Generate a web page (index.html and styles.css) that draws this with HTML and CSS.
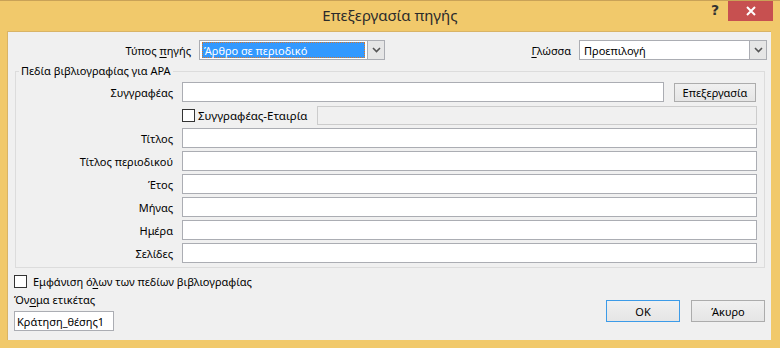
FILE: index.html
```html
<!DOCTYPE html>
<html lang="el">
<head>
<meta charset="utf-8">
<link rel="stylesheet" href="styles.css">
</head>
<body>
<div class="window">
  <div class="titlebar">
    <div class="title">Επεξεργασία πηγής</div>
    <div class="help">?</div>
    <div class="close">
      <svg width="12" height="10" viewBox="0 0 12 10"><path d="M2 1 L10 9 M10 1 L2 9" stroke="#fff" stroke-width="2"/></svg>
    </div>
  </div>
  <div class="client">
    <div class="toprow">
      <label class="toplabel type-label">Τύπος <u>π</u>ηγής</label>
      <div class="select type-select">
        <span class="selval"><span class="hl">Άρθρο σε περιοδικό</span></span>
        <span class="arrow"><svg width="9" height="6" viewBox="0 0 9 6"><path d="M1 1 L4.5 4.5 L8 1" stroke="#555" stroke-width="1.6" fill="none"/></svg></span>
      </div>
      <div class="spacer"></div>
      <label class="toplabel"><u>Γ</u>λώσσα</label>
      <div class="select lang-select">
        <span class="selval">Προεπιλογή</span>
        <span class="arrow"><svg width="9" height="6" viewBox="0 0 9 6"><path d="M1 1 L4.5 4.5 L8 1" stroke="#555" stroke-width="1.6" fill="none"/></svg></span>
      </div>
    </div>
    <fieldset class="group">
      <legend>Πεδία βιβλιογραφίας για APA</legend>
      <div class="fields">
        <label class="flabel">Συγγραφέας</label>
        <div class="authrow"><div class="input grow"></div><div class="btn edit">Επεξεργασία</div></div>
        <div></div>
        <div class="corprow">
          <span class="check"></span><span class="corplabel">Συγγραφέας-Εταιρία</span>
          <div class="input disabled grow"></div>
        </div>
        <label class="flabel">Τίτλος</label><div class="input"></div>
        <label class="flabel">Τίτλος περιοδικού</label><div class="input"></div>
        <label class="flabel">Έτος</label><div class="input"></div>
        <label class="flabel">Μήνας</label><div class="input"></div>
        <label class="flabel">Ημέρα</label><div class="input"></div>
        <label class="flabel">Σελίδες</label><div class="input"></div>
      </div>
    </fieldset>
    <div class="bottom">
      <div class="leftcol">
        <div class="showall"><span class="check"></span><span>Εμφάνιση ό<u>λ</u>ων των πεδίων βιβλιογραφίας</span></div>
        <div class="tagtitle">Όν<u>ο</u>μα ετικέτας</div>
        <div class="input tag">Κράτηση_θέσης1</div>
      </div>
      <div class="buttons">
        <div class="btn ok">OK</div>
        <div class="btn">Άκυρο</div>
      </div>
    </div>
  </div>
</div>
</body>
</html>
```
FILE: styles.css
```css
* { box-sizing: border-box; }
html, body { margin: 0; padding: 0; }
body {
  width: 780px; height: 348px; overflow: hidden;
  font-family: "Noto Sans", "Open Sans", sans-serif;
  font-size: 11px; color: #000;
}
.window {
  width: 780px; height: 348px;
  background: #f1c96b;
  border-top: 1px solid #c9a257;
  display: flex; flex-direction: column;
}
.titlebar {
  height: 30px; display: flex; align-items: flex-start;
}
.title {
  flex: 1; text-align: center; font-size: 15px; color: #2b2b2b;
  padding-top: 4px; padding-left: 69px;
}
.help {
  font-weight: bold; font-size: 14px; color: #333; margin-top: 1px; margin-right: 9px;
  font-family: "DejaVu Sans", sans-serif;
}
.close {
  width: 45px; height: 20px; background: #c75050; margin-right: 7px;
  display: flex; align-items: center; justify-content: center;
}
.client {
  margin: 0 9px 8px 7px;
  flex: 1;
  background: #f0f0f0;
  border-left: 1px solid #d9b466; border-top: 1px solid #d9b466;
  padding: 8px 4px 0 0;
  display: flex; flex-direction: column;
}
.toprow { display: flex; align-items: center; height: 20px; }
.toplabel { text-align: right; margin-right: 8px; white-space: nowrap; }
.type-label { width: 183px; margin-right: 8px; }
.spacer { flex: 1; }
.select {
  height: 20px; border: 1px solid #abadb3; background: #fff;
  display: flex; align-items: stretch;
}
.type-select { width: 186px; }
.lang-select { width: 188px; }
.selval { flex: 1; display: flex; align-items: center; padding: 1px 1px 1px 4px; }
.type-select .selval { padding: 1px 2px; }
.hl {
  flex: 1; height: 16px; background: #3399ff; color: #fff;
  border: 1px dotted #d9772a; display: flex; align-items: center; padding-left: 1px;
}
.arrow {
  width: 17px; background: #e6e6e6; border-left: 1px solid #abadb3;
  display: flex; align-items: center; justify-content: center;
}
u { text-decoration: underline; text-underline-offset: 2px; }
.group {
  margin: 3px 0 0 7px; width: 750px;
  border: 1px solid #dcdcdc; padding: 3px 7px 4px 0;
  min-width: 0;
}
.group legend { padding: 0 2px; margin-left: 3px; line-height: 16px; white-space: nowrap; }
.fields {
  display: grid; grid-template-columns: 157px 1fr; column-gap: 9px; row-gap: 3px;
  grid-auto-rows: 20px;
}
.flabel { text-align: right; align-self: center; white-space: nowrap; }
.input {
  height: 20px; background: #fff; border: 1px solid #abadb3;
}
.input.disabled { background: #f0f0f0; border-color: #cccccc; height: 19px; }
.grow { flex: 1; }
.authrow { display: flex; gap: 10px; align-items: center; }
.btn {
  width: 82px; height: 19px; border: 1px solid #acacac;
  background: linear-gradient(#f0f0f0, #e5e5e5);
  display: flex; align-items: center; justify-content: center;
  white-space: nowrap;
}
.edit { margin-right: 1px; }
.corprow { display: flex; align-items: center; }
.check {
  width: 13px; height: 13px; border: 1px solid #333; background: #fff;
  display: inline-block; flex: none;
}
.corplabel { margin-left: 3px; margin-right: 8px; width: 111px; white-space: nowrap; font-size: 11.5px; }
.bottom { display: flex; padding-left: 6px; flex: 1; }
.leftcol { flex: 1; display: flex; flex-direction: column; }
.showall { display: flex; align-items: center; gap: 6px; margin-top: 6px; height: 14px; white-space: nowrap; }
.tagtitle { margin-top: 4px; line-height: 16px; }
.input.tag {
  width: 100px; margin-top: 3px; display: flex; align-items: center; padding-left: 2px;
  white-space: nowrap;
}
.buttons { display: flex; gap: 11px; align-self: flex-start; margin-top: 32px; margin-right: 2px; }
.buttons .btn { width: 74px; height: 22px; }
.btn.ok { border-color: #3c9be8; }
```
